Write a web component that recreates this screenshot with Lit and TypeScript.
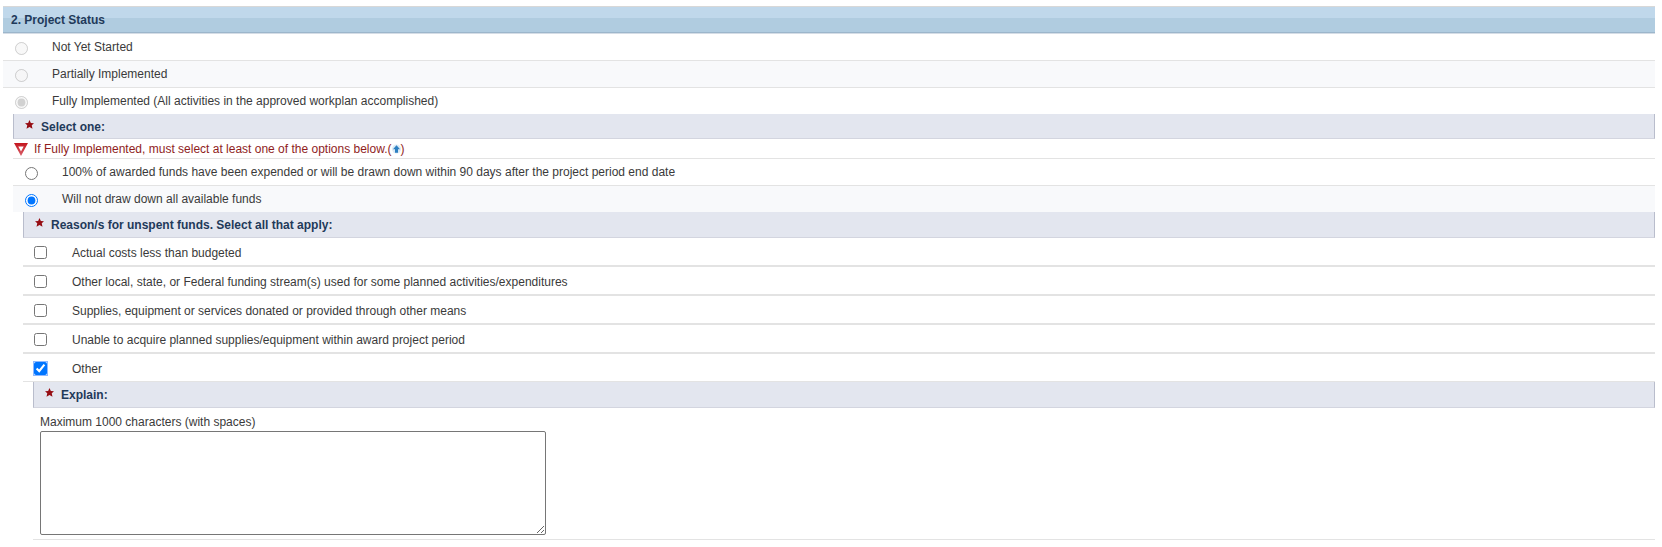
import { LitElement, html, css } from "lit";
import { customElement } from "lit/decorators.js";

const star = html`<svg class="star" viewBox="0 0 10 10" width="9" height="9"><path d="M5 0l1.5 3.2 3.5.3-2.5 2.4.8 3.7L5 7.900 1.700 9.600l.8-3.700L0 3.500l3.500-.3z" fill="#960e14"/></svg>`;

@customElement("app-root")
export class AppRoot extends LitElement {
  static styles = css`
    :host { display: block; width: 1662px; height: 547px; overflow: hidden; background: #fff; font-family: "Liberation Sans", Arial, sans-serif; font-size: 12px; color: #3a3a3a; }
    .page { padding: 6px 7px 0 3px; display: flex; flex-direction: column; }
    .head { height: 27px; margin-bottom: 1px; box-sizing: border-box; border-top: 1px solid #d8d8d8; border-bottom: 1px solid #9cb6cb; box-shadow: 0 1px 0 #d5dde6; background: linear-gradient(#c0d8eb 0 11px, #b0cce0 11px); color: #1f3a5a; font-weight: 700; font-size: 12px; display: flex; align-items: center; padding-left: 8px; }
    .row { display: flex; align-items: center; box-sizing: border-box; height: 27px; border-bottom: 1px solid #e3e3e3; }
    .alt { background: #f8f9fb; }
    .last { height: 26px; border-bottom: 0; }
    .ctl { width: 36px; flex: none; display: flex; justify-content: center; padding-top: 3px; }
    .lab { margin-left: 13px; }
    input { margin: 0; }
    input[type=radio] { width: 13px; height: 13px; }
    input[type=checkbox] { width: 13px; height: 13px; margin-left: -1px; }
    input[type=checkbox]:checked { box-shadow: 0 0 0 1px #8fb8ff; }
    .l1 { margin-left: 10px; }
    .l2 { margin-left: 20px; }
    .l3 { margin-left: 30px; }
    .bar { display: flex; align-items: center; gap: 7px; box-sizing: border-box; background: #e3e6ef; border-left: 1px solid #b9bdcc; border-right: 1px solid #b9bdcc; border-bottom: 1px solid #d3d5df; color: #1f3a5a; font-weight: 700; height: 26px; padding: 1px 0 0 11px; }
    .short { height: 25px; }
    .star { margin-top: -5px; }
    .warn { display: flex; align-items: center; height: 20px; box-sizing: border-box; border-bottom: 1px solid #e3e3e3; color: #8f1d1d; }
    .tri { flex: none; margin: 1px 6px 0 1px; }
    .up { flex: none; margin: 1px 0 0; }
    .chk { height: 29px; border-bottom-width: 2px; }
    .chk .ctl { padding-top: 2px; }
    .chk .lab { margin-top: 2px; }
    .chk.end { height: 28px; border-bottom-width: 1px; }
    .explain { box-sizing: border-box; height: 132px; border-bottom: 1px solid #e3e3e3; padding: 7px 0 0 7px; line-height: 14px; }
    textarea { display: block; box-sizing: border-box; width: 506px; height: 104px; margin: 2px 0 0; border: 1px solid #767676; border-radius: 2px; padding: 2px; background: #fff; resize: both; }
  `;

  render() {
    return html`<div class="page">
      <div class="head">2. Project Status</div>
      <div class="row"><span class="ctl"><input type="radio" disabled /></span><span class="lab">Not Yet Started</span></div>
      <div class="row alt"><span class="ctl"><input type="radio" disabled /></span><span class="lab">Partially Implemented</span></div>
      <div class="row last"><span class="ctl"><input type="radio" disabled checked /></span><span class="lab">Fully Implemented (All activities in the approved workplan accomplished)</span></div>
      <div class="l1">
        <div class="bar short">${star}<span>Select one:</span></div>
        <div class="warn">
          <svg class="tri" width="14" height="13" viewBox="0 0 14 13"><defs><linearGradient id="g" x1="0" y1="0" x2="0" y2="1"><stop offset="0" stop-color="#c4161f"/><stop offset="1" stop-color="#d9606a"/></linearGradient></defs><path fill-rule="evenodd" d="M0 0h14L7 13zM4.300 3.600h5.400L7 8.600z" fill="url(#g)"/></svg>
          <span>If Fully Implemented, must select at least one of the options below.(</span><svg class="up" width="9" height="10" viewBox="0 0 9 10"><circle cx="4.500" cy="5" r="4.500" fill="#dcebf6"/><path d="M4.500 1.200L8 5.200H6V8.800H3V5.200H1z" fill="#2c7fc1"/></svg><span>)</span>
        </div>
        <div class="row"><span class="ctl"><input type="radio" name="a" /></span><span class="lab">100% of awarded funds have been expended or will be drawn down within 90 days after the project period end date</span></div>
        <div class="row alt last"><span class="ctl"><input type="radio" name="a" checked /></span><span class="lab">Will not draw down all available funds</span></div>
      </div>
      <div class="l2">
        <div class="bar">${star}<span>Reason/s for unspent funds. Select all that apply:</span></div>
        <div class="row chk"><span class="ctl"><input type="checkbox" /></span><span class="lab">Actual costs less than budgeted</span></div>
        <div class="row chk"><span class="ctl"><input type="checkbox" /></span><span class="lab">Other local, state, or Federal funding stream(s) used for some planned activities/expenditures</span></div>
        <div class="row chk"><span class="ctl"><input type="checkbox" /></span><span class="lab">Supplies, equipment or services donated or provided through other means</span></div>
        <div class="row chk"><span class="ctl"><input type="checkbox" /></span><span class="lab">Unable to acquire planned supplies/equipment within award project period</span></div>
        <div class="row chk end"><span class="ctl"><input type="checkbox" checked /></span><span class="lab">Other</span></div>
      </div>
      <div class="l3">
        <div class="bar">${star}<span>Explain:</span></div>
        <div class="explain">Maximum 1000 characters (with spaces)<textarea></textarea></div>
      </div>
    </div>`;
  }
}
